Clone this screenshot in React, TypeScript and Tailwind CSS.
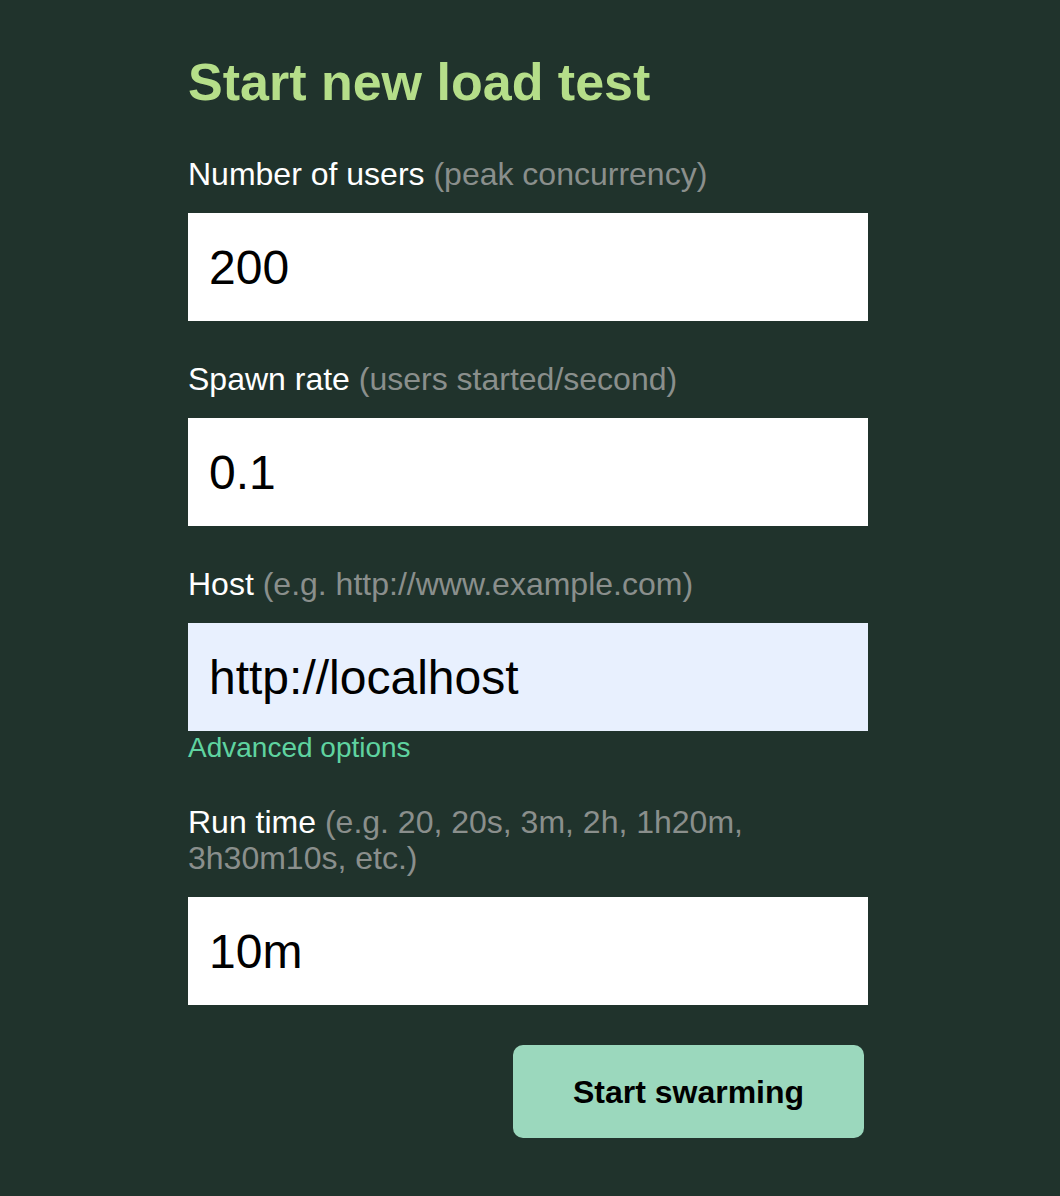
import React from "react";

function Field({ label, hint, value, autofill }: { label: string; hint: string; value: string; autofill?: boolean }) {
  return (
    <div className="flex flex-col">
      <label className="text-[32px] leading-[36px] text-white mb-[21px]">
        {label} <span className="text-[#8a8f8c]">{hint}</span>
      </label>
      <input
        readOnly
        value={value}
        className={`h-[108px] w-full px-[21px] text-[48px] text-black outline-none ${autofill ? "bg-[#e8f0fe]" : "bg-white"}`}
        style={{ fontFamily: '"Liberation Sans", Arial, sans-serif' }}
      />
    </div>
  );
}

export default function App() {
  return (
    <div
      className="min-h-[1196px] w-full bg-[#20332c]"
      style={{ fontFamily: '"Liberation Sans", Arial, sans-serif' }}
    >
      <div className="ml-[188px] w-[680px] pt-[54px] flex flex-col">
        <h1 className="text-[52px] leading-[56px] font-bold text-[#b5de89] mb-[46px]">Start new load test</h1>
        <div className="flex flex-col gap-[40px]">
          <Field label="Number of users" hint="(peak concurrency)" value="200" />
          <Field label="Spawn rate" hint="(users started/second)" value="0.1" />
          <div className="flex flex-col">
            <Field label="Host" hint="(e.g. http://www.example.com)" value="http://localhost" autofill />
            <a className="text-[28px] leading-[33px] text-[#5fd3a0] self-start cursor-pointer">Advanced options</a>
          </div>
          <Field label="Run time" hint="(e.g. 20, 20s, 3m, 2h, 1h20m, 3h30m10s, etc.)" value="10m" />
        </div>
        <div className="flex justify-end mt-[40px] pr-[4px]">
          <button className="w-[351px] h-[93px] rounded-[10px] bg-[#9bd8bd] text-black text-[32px] font-bold">
            Start swarming
          </button>
        </div>
      </div>
    </div>
  );
}
